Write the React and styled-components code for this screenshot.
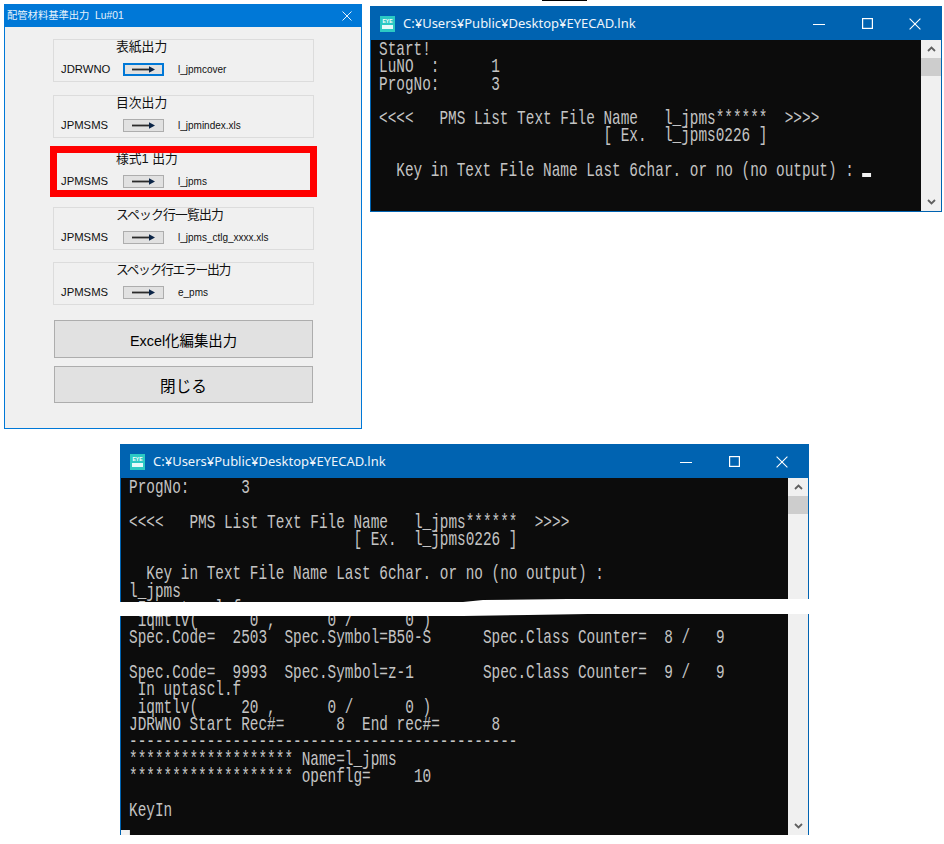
import styled, { createGlobalStyle } from "styled-components";

const GlobalStyle = createGlobalStyle`
  html, body {
    margin: 0;
    padding: 0;
    background: #fff;
  }
`;

const Desktop = styled.div`
  position: relative;
  width: 944px;
  height: 844px;
  overflow: hidden;
  background: #fff;
`;

const TopMark = styled.div`
  position: absolute;
  left: 542px;
  top: 0;
  width: 45px;
  height: 1px;
  background: #000;
`;

// 左側のダイアログ
const Dialog = styled.div`
  position: absolute;
  left: 4px;
  top: 4px;
  width: 358px;
  height: 425px;
  box-sizing: border-box;
  border: 1px solid #0078d7;
  background: #f0f0f0;
  font-family: "Liberation Sans", "Noto Sans CJK JP", sans-serif;
  color: #111;
`;

const DialogTitle = styled.div`
  display: flex;
  align-items: center;
  justify-content: space-between;
  height: 22px;
  padding: 0 9px 0 2px;
  background: #0078d7;
  color: #e8f3fc;
  font-size: 10.3px;
`;

const DialogCaption = styled.span`
  margin-bottom: 3px;
`;

const DialogBody = styled.div`
  display: flex;
  flex-direction: column;
  gap: 13px;
  padding: 12px 48px 0;
`;

const Group = styled.div`
  position: relative;
  height: 43px;
  width: 261px;
  margin-top: ${(p) => (p.$pull ? -1 : 0)}px;
  box-sizing: border-box;
  border: 1px solid #dcdcdc;
`;

const GroupTitle = styled.div`
  height: 14px;
  padding-left: 62px;
  font-size: 12.8px;
  line-height: 14px;
  letter-spacing: ${(p) => p.$spacing || 0}px;
  white-space: nowrap;
`;

const GroupRow = styled.div`
  display: grid;
  grid-template-columns: 62px 41px 1fr;
  align-items: center;
  height: 14px;
  margin-top: 8px;
  padding-left: 7px;
  font-size: 11.3px;
`;

const FileName = styled.span`
  padding-left: 14px;
  font-size: 10px;
  white-space: nowrap;
`;

const ArrowButton = styled.div`
  display: flex;
  align-items: center;
  justify-content: center;
  width: 41px;
  height: 13px;
  box-sizing: border-box;
  background: #e1e1e1;
  border: ${(p) => (p.$focus ? "2px solid #0078d7" : "1px solid #adadad")};
`;

const RedFrame = styled.div`
  position: absolute;
  left: -4px;
  right: -4px;
  top: -6px;
  bottom: -4px;
  border: 7px solid #ff0000;
`;

const BigButton = styled.div`
  display: flex;
  align-items: center;
  justify-content: center;
  width: 259px;
  height: ${(p) => p.$h}px;
  margin-left: 1px;
  box-sizing: border-box;
  border: 1px solid #adadad;
  background: #e1e1e1;
  font-size: ${(p) => p.$size}px;
  color: #000;
`;

const BigButtons = styled.div`
  display: flex;
  flex-direction: column;
  gap: 8px;
  margin-top: 2px;
`;

// コンソール画面
const ConsoleWindow = styled.div`
  position: absolute;
  left: ${(p) => p.$x}px;
  top: ${(p) => p.$y}px;
  width: ${(p) => p.$w}px;
  height: ${(p) => p.$h}px;
  box-sizing: border-box;
  display: flex;
  flex-direction: column;
  border: 1px solid #0063b1;
  border-bottom-width: ${(p) => (p.$cut ? 0 : 1)}px;
`;

const TitleBar = styled.div`
  display: flex;
  align-items: center;
  flex: 0 0 33px;
  padding: 0 2px 0 9px;
  background: #0063b1;
  color: #fff;
  font-family: "Noto Sans", "Noto Sans CJK JP", sans-serif;
  font-size: 13px;
`;

const TitleText = styled.span`
  margin: 0 0 2px 8px;
  flex: 1;
  white-space: nowrap;
  color: #eef5fb;
`;

const WinButton = styled.div`
  display: flex;
  align-items: center;
  justify-content: center;
  width: 48px;
  height: 100%;
`;

const ConsoleBody = styled.div`
  position: relative;
  flex: 1;
  display: flex;
  min-height: 0;
`;

const Screen = styled.div`
  flex: 1;
  min-width: 0;
  display: flex;
  flex-direction: column;
  background: #0c0c0c;
  padding-top: 1px;
  overflow: hidden;
`;

const TextBlock = styled.div`
  height: ${(p) => (p.$h ? `${p.$h}px` : "auto")};
  flex: ${(p) => (p.$h ? "none" : 1)};
  display: flex;
  flex-direction: column;
  justify-content: ${(p) => (p.$end ? "flex-end" : "flex-start")};
  margin-bottom: ${(p) => (p.$end ? -2 : 0)}px;
  overflow: hidden;
`;

const Lines = styled.pre`
  margin: 0;
  width: max-content;
  padding-left: 11.7px;
  font-family: "Liberation Mono", "DejaVu Sans Mono", monospace;
  font-size: 21px;
  line-height: 17.3px;
  color: #c4c4c4;
  transform: scaleX(0.685);
  transform-origin: left top;
`;

const Cursor = styled.span`
  display: inline-block;
  width: 12.6px;
  height: ${(p) => p.$h || 4}px;
  margin-left: ${(p) => (p.$edge ? -11.7 : 0)}px;
  background: #f2f2f2;
  vertical-align: -1px;
`;

const ScrollBar = styled.div`
  flex: 0 0 20px;
  display: flex;
  flex-direction: column;
  align-items: center;
  background: #f0f0f0;
`;

const ScrollArrow = styled.div`
  flex: 0 0 18px;
  display: flex;
  align-items: center;
  justify-content: center;
  margin-top: ${(p) => (p.$down ? "auto" : 0)};
`;

const ScrollThumb = styled.div`
  width: 100%;
  height: 18px;
  background: #cdcdcd;
`;

const Tear = styled.svg`
  position: absolute;
  left: -3px;
  top: 121px;
  width: 695px;
  height: 20px;
`;

const CloseIcon = ({ size = 10, color = "#fff" }) => (
  <svg width={size} height={size} viewBox="0 0 10 10">
    <path d="M0.5 0.5 L9.5 9.5 M9.5 0.5 L0.5 9.5" stroke={color} strokeWidth="0.9" fill="none" />
  </svg>
);

const AppIcon = () => (
  <svg width="15" height="16" viewBox="0 0 15 16">
    <rect width="15" height="16" fill="#2bc9c4" />
    <text x="7.5" y="7" fontSize="5" fontWeight="700" textAnchor="middle" fill="#fff" fontFamily="Liberation Sans">EYE</text>
    <rect x="2" y="9" width="11" height="4" fill="#e6fbfa" />
  </svg>
);

const Arrow = () => (
  <svg width="23" height="7" viewBox="0 0 23 7">
    <rect x="0" y="2.6" width="19" height="1.8" fill="#2b2b2b" />
    <path d="M17 0.2 L23 3.5 L17 6.8 Z" fill="#0b2547" />
  </svg>
);

const Chevron = ({ down }) => (
  <svg width="9" height="6" viewBox="0 0 9 6">
    <path
      d={down ? "M1 1 L4.5 4.5 L8 1" : "M1 5 L4.5 1.5 L8 5"}
      stroke="#606060"
      strokeWidth="1.8"
      fill="none"
    />
  </svg>
);

const groups = [
  { title: "表紙出力", left: "JDRWNO", file: "l_jpmcover", focus: true },
  { title: "目次出力", left: "JPMSMS", file: "l_jpmindex.xls" },
  { title: "様式1 出力", left: "JPMSMS", file: "l_jpms", marked: true },
  { title: "スペック行一覧出力", left: "JPMSMS", file: "l_jpms_ctlg_xxxx.xls", spacing: -0.8 },
  { title: "スペック行エラー出力", left: "JPMSMS", file: "e_pms", spacing: -1.3, pull: true },
];

const CONSOLE_ONE = `Start!
LuNO  :      1
ProgNo:      3

<<<<   PMS List Text File Name   l_jpms******  >>>>
                          [ Ex.  l_jpms0226 ]

  Key in Text File Name Last 6char. or no (no output) : `;

const CONSOLE_TWO_TOP = `ProgNo:      3

<<<<   PMS List Text File Name   l_jpms******  >>>>
                          [ Ex.  l_jpms0226 ]

  Key in Text File Name Last 6char. or no (no output) :
l_jpms
 In uptascl.f`;

const CONSOLE_TWO_BOTTOM = ` iqmtlv(      0 ,      0 /      0 )
Spec.Code=  2503  Spec.Symbol=B50-S      Spec.Class Counter=  8 /   9

Spec.Code=  9993  Spec.Symbol=z-1        Spec.Class Counter=  9 /   9
 In uptascl.f
 iqmtlv(     20 ,      0 /      0 )
JDRWNO Start Rec#=      8  End rec#=      8
---------------------------------------------
******************* Name=l_jpms
******************* openflg=     10

KeyIn
`;

function ConsoleFrame({ x, y, w, h, cut, children }) {
  return (
    <ConsoleWindow $x={x} $y={y} $w={w} $h={h} $cut={cut}>
      <TitleBar>
        <AppIcon />
        <TitleText>C:¥Users¥Public¥Desktop¥EYECAD.lnk</TitleText>
        <WinButton>
          <svg width="12" height="10" viewBox="0 0 12 10">
            <rect x="0" y="5" width="12" height="1" fill="#fff" />
          </svg>
        </WinButton>
        <WinButton>
          <svg width="11" height="11" viewBox="0 0 11 11">
            <rect x="0.6" y="0.6" width="9.8" height="9.8" fill="none" stroke="#fff" strokeWidth="1.2" />
          </svg>
        </WinButton>
        <WinButton>
          <CloseIcon size={12} />
        </WinButton>
      </TitleBar>
      <ConsoleBody>
        {children}
        <ScrollBar>
          <ScrollArrow>
            <Chevron />
          </ScrollArrow>
          <ScrollThumb />
          <ScrollArrow $down>
            <Chevron down />
          </ScrollArrow>
        </ScrollBar>
      </ConsoleBody>
    </ConsoleWindow>
  );
}

export default function App() {
  return (
    <Desktop>
      <GlobalStyle />
      <TopMark />

      <Dialog>
        <DialogTitle>
          <DialogCaption>配管材料基準出力&nbsp; Lu#01</DialogCaption>
          <CloseIcon />
        </DialogTitle>
        <DialogBody>
          {groups.map((g) => (
            <Group key={g.title} $pull={g.pull}>
              <GroupTitle $spacing={g.spacing}>{g.title}</GroupTitle>
              <GroupRow>
                <span>{g.left}</span>
                <ArrowButton $focus={g.focus}>
                  <Arrow />
                </ArrowButton>
                <FileName>{g.file}</FileName>
              </GroupRow>
              {g.marked && <RedFrame />}
            </Group>
          ))}
          <BigButtons>
            <BigButton $h={38} $size={14.4}>Excel化編集出力</BigButton>
            <BigButton $h={37} $size={15.6}>閉じる</BigButton>
          </BigButtons>
        </DialogBody>
      </Dialog>

      <ConsoleFrame x={370} y={6} w={572} h={206}>
        <Screen>
          <Lines>
            {CONSOLE_ONE}
            <Cursor />
          </Lines>
        </Screen>
      </ConsoleFrame>

      <ConsoleFrame x={120} y={444} w={689} h={391} cut>
        <Screen>
          <TextBlock $h={129}>
            <Lines>{CONSOLE_TWO_TOP}</Lines>
          </TextBlock>
          <TextBlock $end>
            <Lines>
              {CONSOLE_TWO_BOTTOM}
              <Cursor $h={5} $edge />
            </Lines>
          </TextBlock>
        </Screen>
        <Tear viewBox="0 0 695 20">
          <path
            d="M0 3 L345 3 L355 2 L365 1 L450 0 L695 0 L695 15 L470 15 L410 16 L345 17 L0 17 Z"
            fill="#fff"
          />
        </Tear>
      </ConsoleFrame>
    </Desktop>
  );
}
